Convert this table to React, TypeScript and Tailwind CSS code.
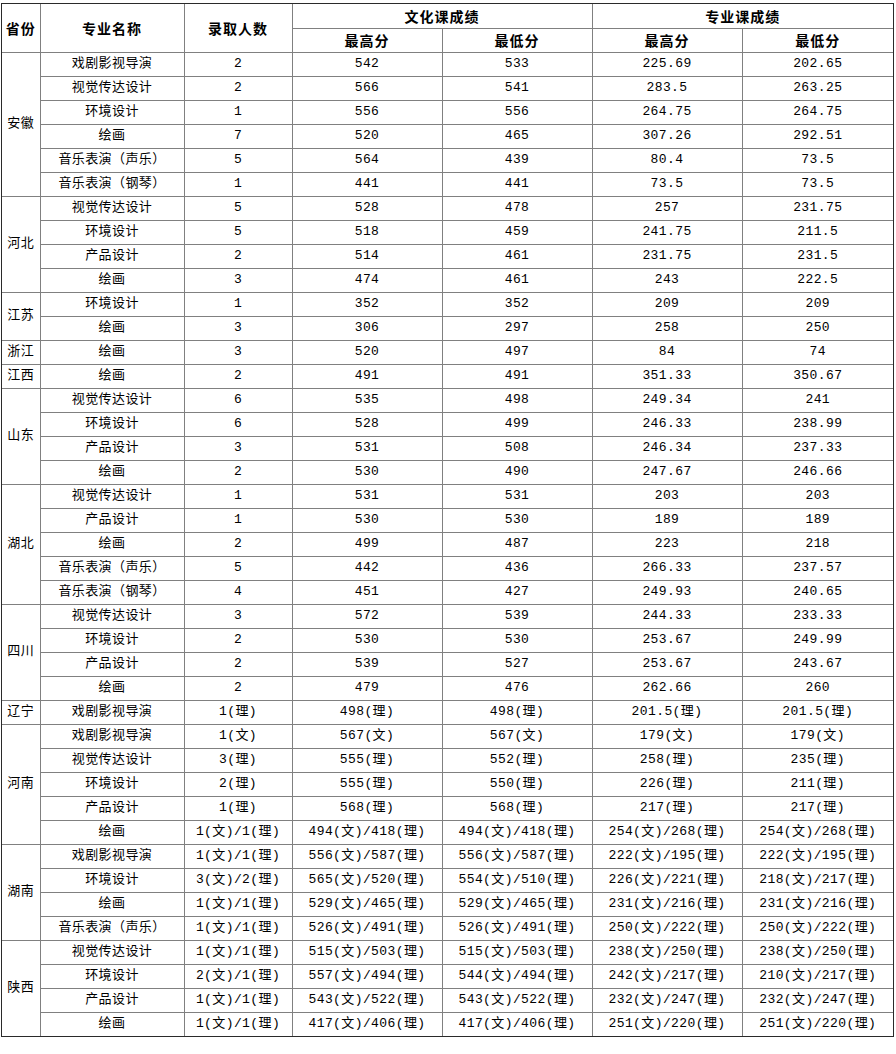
import React from "react";

type Row = [string, string, string, string, string, string];
type Group = { p: string; rows: Row[] };

const data: Group[] = [
  {
    p: "安徽",
    rows: [
      ["戏剧影视导演", "2", "542", "533", "225.69", "202.65"],
      ["视觉传达设计", "2", "566", "541", "283.5", "263.25"],
      ["环境设计", "1", "556", "556", "264.75", "264.75"],
      ["绘画", "7", "520", "465", "307.26", "292.51"],
      ["音乐表演（声乐）", "5", "564", "439", "80.4", "73.5"],
      ["音乐表演（钢琴）", "1", "441", "441", "73.5", "73.5"],
    ],
  },
  {
    p: "河北",
    rows: [
      ["视觉传达设计", "5", "528", "478", "257", "231.75"],
      ["环境设计", "5", "518", "459", "241.75", "211.5"],
      ["产品设计", "2", "514", "461", "231.75", "231.5"],
      ["绘画", "3", "474", "461", "243", "222.5"],
    ],
  },
  {
    p: "江苏",
    rows: [
      ["环境设计", "1", "352", "352", "209", "209"],
      ["绘画", "3", "306", "297", "258", "250"],
    ],
  },
  { p: "浙江", rows: [["绘画", "3", "520", "497", "84", "74"]] },
  { p: "江西", rows: [["绘画", "2", "491", "491", "351.33", "350.67"]] },
  {
    p: "山东",
    rows: [
      ["视觉传达设计", "6", "535", "498", "249.34", "241"],
      ["环境设计", "6", "528", "499", "246.33", "238.99"],
      ["产品设计", "3", "531", "508", "246.34", "237.33"],
      ["绘画", "2", "530", "490", "247.67", "246.66"],
    ],
  },
  {
    p: "湖北",
    rows: [
      ["视觉传达设计", "1", "531", "531", "203", "203"],
      ["产品设计", "1", "530", "530", "189", "189"],
      ["绘画", "2", "499", "487", "223", "218"],
      ["音乐表演（声乐）", "5", "442", "436", "266.33", "237.57"],
      ["音乐表演（钢琴）", "4", "451", "427", "249.93", "240.65"],
    ],
  },
  {
    p: "四川",
    rows: [
      ["视觉传达设计", "3", "572", "539", "244.33", "233.33"],
      ["环境设计", "2", "530", "530", "253.67", "249.99"],
      ["产品设计", "2", "539", "527", "253.67", "243.67"],
      ["绘画", "2", "479", "476", "262.66", "260"],
    ],
  },
  {
    p: "辽宁",
    rows: [["戏剧影视导演", "1(理)", "498(理)", "498(理)", "201.5(理)", "201.5(理)"]],
  },
  {
    p: "河南",
    rows: [
      ["戏剧影视导演", "1(文)", "567(文)", "567(文)", "179(文)", "179(文)"],
      ["视觉传达设计", "3(理)", "555(理)", "552(理)", "258(理)", "235(理)"],
      ["环境设计", "2(理)", "555(理)", "550(理)", "226(理)", "211(理)"],
      ["产品设计", "1(理)", "568(理)", "568(理)", "217(理)", "217(理)"],
      ["绘画", "1(文)/1(理)", "494(文)/418(理)", "494(文)/418(理)", "254(文)/268(理)", "254(文)/268(理)"],
    ],
  },
  {
    p: "湖南",
    rows: [
      ["戏剧影视导演", "1(文)/1(理)", "556(文)/587(理)", "556(文)/587(理)", "222(文)/195(理)", "222(文)/195(理)"],
      ["环境设计", "3(文)/2(理)", "565(文)/520(理)", "554(文)/510(理)", "226(文)/221(理)", "218(文)/217(理)"],
      ["绘画", "1(文)/1(理)", "529(文)/465(理)", "529(文)/465(理)", "231(文)/216(理)", "231(文)/216(理)"],
      ["音乐表演（声乐）", "1(文)/1(理)", "526(文)/491(理)", "526(文)/491(理)", "250(文)/222(理)", "250(文)/222(理)"],
    ],
  },
  {
    p: "陕西",
    rows: [
      ["视觉传达设计", "1(文)/1(理)", "515(文)/503(理)", "515(文)/503(理)", "238(文)/250(理)", "238(文)/250(理)"],
      ["环境设计", "2(文)/1(理)", "557(文)/494(理)", "544(文)/494(理)", "242(文)/217(理)", "210(文)/217(理)"],
      ["产品设计", "1(文)/1(理)", "543(文)/522(理)", "543(文)/522(理)", "232(文)/247(理)", "232(文)/247(理)"],
      ["绘画", "1(文)/1(理)", "417(文)/406(理)", "417(文)/406(理)", "251(文)/220(理)", "251(文)/220(理)"],
    ],
  },
];

const cell = "border border-[#808080] text-center align-middle p-0";
const th = `${cell} font-bold text-[14px] leading-[20px] tracking-[1px] text-black`;

export default function App() {
  return (
    <div className="bg-white w-[896px] h-[1054px] pt-[3px] pl-[1px]">
      <div className="w-[893px] border border-[#2a2a2a]">
        <table
          className="w-[891px] table-fixed border-collapse border-hidden text-black"
          style={{ fontFamily: '"Liberation Mono", "Noto Sans CJK SC", monospace' }}
        >
          <colgroup>
            <col className="w-[38px]" />
            <col className="w-[144px]" />
            <col className="w-[108px]" />
            <col className="w-[150px]" />
            <col className="w-[150px]" />
            <col className="w-[150px]" />
            <col className="w-[151px]" />
          </colgroup>
          <thead style={{ fontFamily: '"Noto Sans CJK SC", sans-serif' }}>
            <tr className="h-[24px]">
              <th rowSpan={2} className={`${th} tracking-[0px]`}>省份</th>
              <th rowSpan={2} className={th}>专业名称</th>
              <th rowSpan={2} className={th}>录取人数</th>
              <th colSpan={2} className={th}>文化课成绩</th>
              <th colSpan={2} className={th}>专业课成绩</th>
            </tr>
            <tr className="h-[24px]">
              <th className={th}>最高分</th>
              <th className={th}>最低分</th>
              <th className={th}>最高分</th>
              <th className={th}>最低分</th>
            </tr>
          </thead>
          <tbody className="text-[13px] tracking-[0.4px]">
            {data.map((g) =>
              g.rows.map((r, i) => (
                <tr key={g.p + i} className="h-[24px] leading-[22px]">
                  {i === 0 && (
                    <td rowSpan={g.rows.length} className={cell}>
                      {g.p}
                    </td>
                  )}
                  {r.map((c, j) => (
                    <td key={j} className={cell}>
                      {c}
                    </td>
                  ))}
                </tr>
              ))
            )}
          </tbody>
        </table>
      </div>
    </div>
  );
}
